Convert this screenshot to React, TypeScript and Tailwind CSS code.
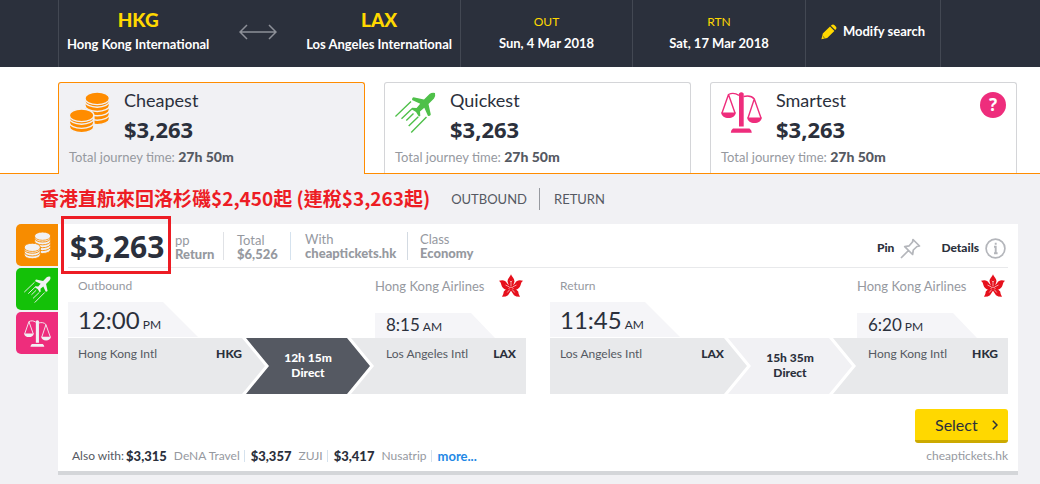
import type { ReactNode } from "react";

type IconProps = { className?: string; gap?: string };

function Coin({ x, y, gap }: { x: number; y: number; gap: string }) {
  return (
    <path
      d={`M${x} ${y}a12.2 6 0 0 1 24.4 0v3.2a12.2 6 0 0 1-24.4 0z`}
      fill="currentColor"
      stroke={gap}
      strokeWidth="1.4"
    />
  );
}

function CoinsIcon({ className, gap = "#f1f1f4" }: IconProps) {
  return (
    <svg viewBox="0 0 41 41" className={className} aria-hidden="true">
      {[23.5, 19, 14.6, 10.3, 6].map((y) => (
        <Coin key={y} x={16} y={y} gap={gap} />
      ))}
      <path d="M16 6.6a12.2 6 0 0 0 24.4 0" fill="none" stroke={gap} strokeWidth="1.2" />
      {[31.5, 27.2, 23].map((y) => (
        <Coin key={y} x={0.4} y={y} gap={gap} />
      ))}
      <path d="M.4 23.6a12.2 6 0 0 0 24.4 0" fill="none" stroke={gap} strokeWidth="1.2" />
    </svg>
  );
}

function PlaneIcon({ className }: IconProps) {
  return (
    <svg viewBox="0 0 41 41" className={className} aria-hidden="true">
      <path
        fill="currentColor"
        d="M40 1Q37 .2 34.500 2L29 7.500 18.500 5.200Q17 5.400 17 8L25.200 11.700 21.600 16 17 15.700 16.500 17.200 21 20 23.800 24.500 25.300 24 25 19.400 29.300 15.800 33 24Q35.600 24 35.800 22.500L33.500 12 39 6.500Q40.800 4 40 1z"
      />
      <path
        fill="none"
        stroke="currentColor"
        strokeWidth="1.400"
        d="M.4 24.500 16 9.500M6.500 26.800 17 16.800M11.300 28.600 18.500 21.600M13.700 34 23.300 24.800M16.200 40.400 31.500 25"
      />
    </svg>
  );
}

function ScalesIcon({ className }: IconProps) {
  return (
    <svg viewBox="0 0 41 41" className={className} aria-hidden="true">
      <path
        fill="currentColor"
        d="M18 1.500Q20.300-.8 22.700 1.500V34.500H18zM12 36.500H28.500Q30.700 38 30.800 40.800H9.800Q9.900 38 12 36.500zM0 20.500H15C14 24.500 11.500 26 7.500 26S1 24.500 0 20.500zM26 25.500H41C40 29.500 37.500 31 33.500 31S27 29.500 26 25.500z"
      />
      <path
        fill="none"
        stroke="currentColor"
        strokeWidth="1.400"
        d="M18 3.300C14 .8 11 .6 7.500 2.500L1 21M7.500 2.500 14 21M22.500 4.500C26.500 3.500 30.500 3.500 33.300 7L27 26M33.300 7 40 26"
      />
    </svg>
  );
}

function BauhiniaLogo() {
  return (
    <svg viewBox="0 0 24 24" className="h-6 w-6" role="img" aria-label="Hong Kong Airlines">
      <g fill="#e6101c">
        <path d="M12 .3C12.800 3 15.800 4.500 15.400 7.800L14 12H10L8.600 7.800C8.200 4.500 11.200 3 12 .3z" />
        {["", "matrix(-1 0 0 1 24 0)"].map((flip) => (
          <g key={flip} transform={flip || undefined}>
            <path d="M0 6.800C3.500 5.600 6.500 6.200 7.800 9L11 12.500 10.500 15.800C5.500 16.500 3 13.500 2.400 11Q2 8.300 0 6.800z" />
            <path d="M9.500 14 12.300 16.200Q10.800 18.500 9 21.200 7 22.800 3 22.700 4.600 20.500 4.800 17.500 6.500 15 9.500 14z" />
          </g>
        ))}
        <circle cx="12" cy="13.500" r="3" />
      </g>
      <g fill="none" stroke="#fff" strokeWidth=".6">
        <path d="M12 12V8M10.800 6.800 12 8 13.200 6.800M10.500 13 6.500 11M13.500 13 17.500 11M10.800 15.500 8.300 18.500M13.200 15.500 15.700 18.500M9.500 14.500Q12 11.500 14.500 14.500" />
      </g>
    </svg>
  );
}

function PencilIcon() {
  return (
    <svg viewBox="0 0 16 16" className="h-4 w-4 text-[#ffd800]" aria-hidden="true">
      <path
        fill="currentColor"
        d="M.4 15.300 1.800 9.600 9 2.500 13.400 6.900 6.200 14zM9.800 1.800 11 .8Q12.200 0 13.300 1L15 2.700Q16 3.900 15.100 5L14.200 6.100z"
      />
      <path d="M1.800 12.300 3.700 14.100" stroke="#2b303c" strokeWidth=".7" />
    </svg>
  );
}

function HeaderCell({ title, text, className }: { title: string; text: string; className: string }) {
  return (
    <div className={`flex flex-col items-center border-r border-[#434853] pt-[13px] ${className}`}>
      <span className="text-[12px] leading-[18px] text-[#ffd800]">{title}</span>
      <span className="pt-[3px] text-[13px] font-bold leading-[18px] text-white">{text}</span>
    </div>
  );
}

function Airport({ code, name }: { code: string; name: string }) {
  return (
    <div className="text-center">
      <div className="text-[19px] font-black leading-6 text-[#ffd800]">{code}</div>
      <div className="text-[13px] font-bold leading-6 text-white">{name}</div>
    </div>
  );
}

function SortTab({
  icon,
  title,
  active = false,
  children,
}: {
  icon: ReactNode;
  title: string;
  active?: boolean;
  children?: ReactNode;
}) {
  const look = active
    ? "-mb-px border-[#ff8c00] bg-[#f1f1f4] pb-px"
    : "border-[#d4d5d8] bg-white";
  return (
    <div className={`flex flex-1 rounded-t-[3px] border border-b-0 ${look}`}>
      <button type="button" className="flex-1 px-[10px] pt-[5px] text-left">
        <span className="flex gap-[14px]">
          <span className="pt-1">{icon}</span>
          <span className="block">
            <span className="block text-[18px] leading-6 text-[#2b303c]">{title}</span>
            <span className="block pt-[3px] font-['Noto_Sans'] text-[22px] font-bold leading-7 text-[#2b303c]">
              $3,263
            </span>
          </span>
        </span>
        <span className="block pb-[6px] pt-1 text-[13px] leading-5 text-[#96999f]">
          Total journey time: <b className="text-[14px] font-black text-[#555962]">27h 50m</b>
        </span>
      </button>
      {children}
    </div>
  );
}

function Fact({ label, value, className = "" }: { label: string; value: string; className?: string }) {
  return (
    <div className={`text-[13px] leading-[14px] text-[#96999f] ${className}`}>
      <div>{label}</div>
      <div className="font-black">{value}</div>
    </div>
  );
}

type LegData = {
  title: string;
  depart: string;
  departHalf: string;
  arrive: string;
  arriveHalf: string;
  from: string;
  fromCode: string;
  to: string;
  toCode: string;
  duration: string;
  dark?: boolean;
};

const legs: LegData[] = [
  {
    title: "Outbound",
    depart: "12:00",
    departHalf: "PM",
    arrive: "8:15",
    arriveHalf: "AM",
    from: "Hong Kong Intl",
    fromCode: "HKG",
    to: "Los Angeles Intl",
    toCode: "LAX",
    duration: "12h 15m",
    dark: true,
  },
  {
    title: "Return",
    depart: "11:45",
    departHalf: "AM",
    arrive: "6:20",
    arriveHalf: "PM",
    from: "Los Angeles Intl",
    fromCode: "LAX",
    to: "Hong Kong Intl",
    toCode: "HKG",
    duration: "15h 35m",
  },
];

function Leg({ leg }: { leg: LegData }) {
  return (
    <section className="flex-1">
      <div className="flex h-[34px] justify-between pt-[6px]">
        <h3 className="pl-[10px] text-[12px] leading-6 text-[#96999f]">{leg.title}</h3>
        <div className="flex w-[151px] justify-between pr-[3px]">
          <span className="whitespace-nowrap text-[13px] leading-6 text-[#96999f]">Hong Kong Airlines</span>
          <BauhiniaLogo />
        </div>
      </div>
      <div className="flex items-end justify-between">
        <div className="mb-px h-[35px] w-[130px] bg-[#f5f5f8] pl-[10px] text-[24px] leading-[36px] text-[#2b303c] [clip-path:polygon(0_0,95px_0,100%_100%,0_100%)]">
          {leg.depart}
          <span className="pl-[3px] text-[12px]">{leg.departHalf}</span>
        </div>
        <div className="w-[151px]">
          <div className="h-[25px] w-[120px] bg-[#f5f5f8] pl-[11px] text-[17px] leading-[24px] text-[#2b303c] [clip-path:polygon(0_0,96px_0,100%_100%,0_100%)]">
            {leg.arrive}
            <span className="pl-[3px] text-[12px]">{leg.arriveHalf}</span>
          </div>
        </div>
      </div>
      <div className="flex h-14 text-[12px] leading-4 text-[#555962]">
        <div className="flex flex-1 justify-between bg-[#e8e9eb] pl-[10px] pr-[23px] pt-2 [clip-path:polygon(0_0,calc(100%_-_23px)_0,100%_50%,calc(100%_-_23px)_100%,0_100%)]">
          <span>{leg.from}</span>
          <b className="font-black text-[#2b303c]">{leg.fromCode}</b>
        </div>
        <div
          className={`-ml-[19px] flex w-[124px] flex-col items-center pt-3 text-[12px] font-black leading-[15px] [clip-path:polygon(0_0,calc(100%_-_23px)_0,100%_50%,calc(100%_-_23px)_100%,0_100%,23px_50%)] ${
            leg.dark ? "bg-[#555962] text-white" : "bg-[#f1f1f4] text-[#2b303c]"
          }`}
        >
          <span>{leg.duration}</span>
          <span>Direct</span>
        </div>
        <div className="-ml-[19px] flex w-[175px] justify-between bg-[#e8e9eb] pl-[35px] pr-[10px] pt-2 [clip-path:polygon(0_0,100%_0,100%_100%,0_100%,23px_50%)]">
          <span>{leg.to}</span>
          <b className="font-black text-[#2b303c]">{leg.toCode}</b>
        </div>
      </div>
    </section>
  );
}

const offers = [
  { price: "$3,315", seller: "DeNA Travel" },
  { price: "$3,357", seller: "ZUJI" },
  { price: "$3,417", seller: "Nusatrip" },
];

export default function App() {
  return (
    <div className="min-h-screen bg-[#f1f1f4] font-['Lato','Noto_Sans_CJK_TC',sans-serif]">
      <header className="flex h-[67px] bg-[#2b303c] pl-[58px]">
        <div className="flex w-[403px] items-start justify-between border-x border-[#434853] px-2 pt-2">
          <Airport code="HKG" name="Hong Kong International" />
          <svg viewBox="0 0 38 16" className="mt-4 h-4 w-[38px]" fill="none" stroke="#8d9098" strokeWidth="1.500" aria-hidden="true">
            <path d="M1 8H37M8 1 1 8 8 15M30 1 37 8 30 15" />
          </svg>
          <Airport code="LAX" name="Los Angeles International" />
        </div>
        <HeaderCell title="OUT" text="Sun, 4 Mar 2018" className="w-[172px]" />
        <HeaderCell title="RTN" text="Sat, 17 Mar 2018" className="w-[173px]" />
        <button
          type="button"
          className="flex w-[135px] items-center justify-center gap-[6px] border-r border-[#434853] pb-[3px] text-[13px] font-bold text-white"
        >
          <PencilIcon />
          Modify search
        </button>
      </header>

      <nav className="flex gap-[19px] border-b border-[#ff8c00] bg-white pl-[58px] pr-[23px] pt-[15px]">
        <SortTab active title="Cheapest" icon={<CoinsIcon className="h-[41px] w-[41px] text-[#ff8c00]" />} />
        <SortTab title="Quickest" icon={<PlaneIcon className="h-[41px] w-[41px] text-[#4fc04a]" />} />
        <SortTab title="Smartest" icon={<ScalesIcon className="h-[41px] w-[41px] text-[#ee2d7c]" />}>
          <button
            type="button"
            aria-label="Help"
            className="mr-[10px] mt-[9px] h-[26px] w-[26px] rounded-full bg-[#ee2d7c] font-['Noto_Sans'] text-[17px] font-bold leading-[26px] text-white"
          >
            ?
          </button>
        </SortTab>
      </nav>

      <div className="flex h-[50px] items-center pl-10">
        <p className="whitespace-nowrap pb-[2px] pr-[21px] font-['Noto_Sans_CJK_TC',sans-serif] text-[19px] font-bold text-[#ed1c24]">
          香港直航來回洛杉磯$2,450起 (連稅$3,263起)
        </p>
        <a href="#outbound" className="border-r border-[#96999f] pr-3 text-[13px] leading-[22px] text-[#555962]">
          OUTBOUND
        </a>
        <a href="#return" className="pl-[14px] text-[13px] leading-[22px] text-[#555962]">
          RETURN
        </a>
      </div>

      <main className="flex items-start pl-4 pr-[22px]">
        <div className="flex w-[42px] flex-col gap-[2px]">
          <button type="button" aria-label="Cheapest" className="flex h-[42px] items-center justify-center rounded-l-[5px] bg-[#f78c00] text-[#f1f1f4]">
            <CoinsIcon className="h-[27px] w-[27px]" gap="#f78c00" />
          </button>
          <button type="button" aria-label="Quickest" className="flex h-[42px] items-center justify-center rounded-l-[5px] bg-[#14c108] text-[#f1f1f4]">
            <PlaneIcon className="h-[27px] w-[27px]" />
          </button>
          <button type="button" aria-label="Smartest" className="flex h-[42px] items-center justify-center rounded-l-[5px] bg-[#ee2d7c] text-[#f1f1f4]">
            <ScalesIcon className="h-[27px] w-[27px]" />
          </button>
        </div>

        <article className="flex-1 border-b-4 border-[#d4d6d9] bg-white px-[10px] pb-[5px]">
          <div className="flex h-11 items-start border-b border-[#e8e9eb]">
            <div className="relative w-[107px] pl-[2px] font-['Noto_Sans'] text-[30px] font-bold leading-[45px] text-[#2b303c]">
              $3,263
              <span className="pointer-events-none absolute -left-[7px] -top-2 h-[58px] w-[110px] border-[3px] border-[#ed1c24]" />
            </div>
            <Fact label="pp" value="Return" className="w-12 pt-[9px]" />
            <Fact label="Total" value="$6,526" className="mt-2 h-7 w-[67px] border-l border-[#e0e2e6] pl-[13px] pt-px" />
            <Fact label="With" value="cheaptickets.hk" className="mt-2 h-7 w-[117px] border-l border-[#d5e2ee] pl-[14px]" />
            <Fact label="Class" value="Economy" className="mt-2 h-7 border-l border-[#d3dae2] pl-3" />
            <div className="ml-auto flex h-12 items-center gap-5 text-[12px] font-black text-[#2b303c]">
              <button type="button" className="flex items-center gap-[6px]">
                Pin
                <svg viewBox="0 0 21 21" className="h-[21px] w-[21px]" fill="none" stroke="#b4b6bb" strokeWidth="1.700" strokeLinejoin="round" aria-hidden="true">
                  <path d="M13 1.500 19.500 8 17 8.500 13.300 12 12.600 16.500 4.700 8.600 9.200 7.800 12.500 4zM8.500 12.500 1 20" />
                </svg>
              </button>
              <button type="button" className="flex items-center gap-[6px] pr-[2px]">
                Details
                <svg viewBox="0 0 21 21" className="h-[21px] w-[21px]" fill="none" stroke="#b4b6bb" aria-hidden="true">
                  <circle cx="10.500" cy="10.500" r="9.400" strokeWidth="1.700" />
                  <path d="M9 8.800H10.700V15.500M9 15.300H12.600M10.700 4.800V6.800" strokeWidth="1.900" />
                </svg>
              </button>
            </div>
          </div>

          <div className="flex gap-6">
            {legs.map((leg) => (
              <Leg key={leg.title} leg={leg} />
            ))}
          </div>

          <div className="flex justify-end pt-[15px]">
            <button
              type="button"
              className="flex h-[34px] w-[93px] items-center justify-between rounded-[3px] border-b-[3px] border-[#ccaa00] bg-[#ffd800] pl-5 pr-[10px] text-[16px] text-[#2b303c]"
            >
              Select
              <svg viewBox="0 0 6 10" className="h-[10px] w-[6px]" fill="none" stroke="#2b303c" strokeWidth="1.500" aria-hidden="true">
                <path d="M.8.8 5 5 .8 9.200" />
              </svg>
            </button>
          </div>

          <div className="flex items-center justify-between pl-1 pt-[3px] text-[12px] leading-5 text-[#96999f]">
            <div className="flex items-center">
              <span className="pr-[2px] text-[#555962]">Also with:</span>
              {offers.map((offer) => (
                <span key={offer.seller} className="mr-[6px] flex items-center gap-[7px] border-r border-[#d5e2ee] pr-1 leading-3">
                  <b className="text-[13px] font-black text-[#2b303c]">{offer.price}</b>
                  <span>{offer.seller}</span>
                </span>
              ))}
              <a href="#more" className="text-[13px] font-bold text-[#1e88e5]">
                more...
              </a>
            </div>
            <span>cheaptickets.hk</span>
          </div>
        </article>
      </main>
    </div>
  );
}
